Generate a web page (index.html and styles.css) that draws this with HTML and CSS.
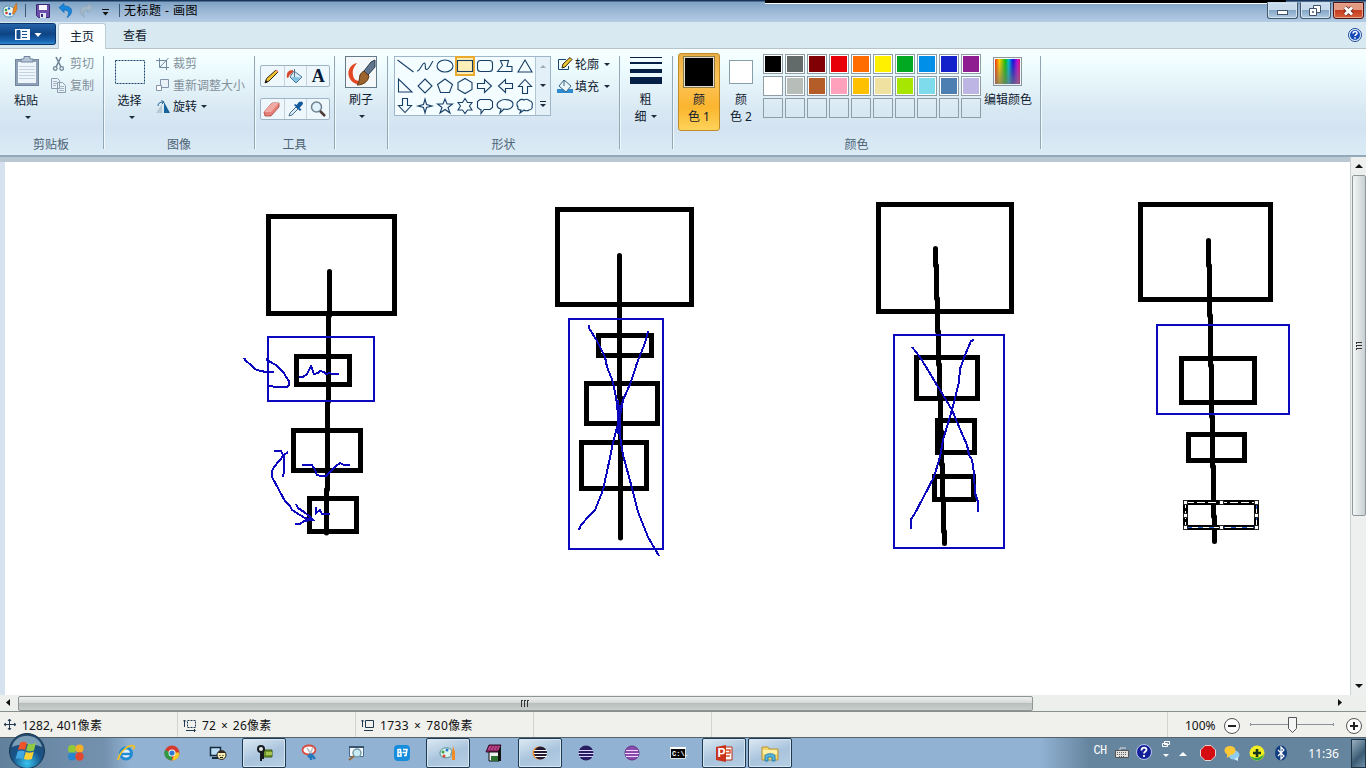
FILE: index.html
```html
<!DOCTYPE html>
<html lang="zh-CN">
<head>
<meta charset="utf-8">
<title>无标题 - 画图</title>
<link rel="stylesheet" href="styles.css">
</head>
<body>
<div class="screen">
  <header class="titlebar">
    <svg class="quick" width="124" height="22" viewBox="0 0 124 22">
      <path d="M3 11c0-5 5-6 9-4 3 2 1 3 2 5s-1 5-5 5-6-2-6-6z" fill="#e8f4f4" stroke="#4d91a6"/>
      <circle cx="6" cy="10" r="1.3" fill="#31a043"/><circle cx="9" cy="8.500" r="1.200" fill="#2a6fd0"/><circle cx="6.500" cy="13" r="1.300" fill="#d83a2a"/><circle cx="10" cy="14" r="1.300" fill="#2a6fd0"/>
      <path d="M12.500 14l1-6 3-5 .5 6-3 5z" fill="#ef8a1d" stroke="#b65a10" stroke-width=".5"/>
      <path d="M25.500 4v13M119.500 4v13" stroke="#3f5871"/>
      <path d="M36.500 4.500h13v13h-11l-2-2z" fill="#6b4faa" stroke="#3c2775"/><path d="M39 5h8v5h-8z" fill="#f6f5ff"/><path d="M40 13h6v5h-6z" fill="#dfe5f2"/><path d="M41 14h2v3h-2z" fill="#3c2775"/>
      <path d="M59 7.500l5-4v2.500c6 0 9 3 7 7.500-1 2-2 3-4 4 1-2 2-3 1.500-5-.5-2-2-2.500-4.500-2.500v2.500z" fill="#1686dc" stroke="#0a5cab" stroke-width=".6"/>
      <path d="M93 7.500l-5-4v2.500c-6 0-9 3-7 7.500 1 2 2 3 4 4-1-2-2-3-1.500-5 .5-2 2-2.500 4.500-2.500v2.500z" fill="#a3b7c8" stroke="#8da4b8" stroke-width=".6"/>
      <path d="M102 9.500h7" stroke="#111"/><path d="M102.500 12h6l-3 3.500z" fill="#111"/>
    </svg>
    <span class="title">无标题 - 画图</span>
    <span class="topline"></span>
    <div class="winbtns">
      <span class="wbtn"><svg width="28" height="16"><rect x="9.500" y="7.500" width="10" height="4" fill="#fff" stroke="#40536a"/></svg></span>
      <span class="wbtn"><svg width="28" height="16"><path d="M12.500 2.500h7v7h-7z" fill="#fff" stroke="#40536a"/><path d="M8.500 5.500h7v7h-7z" fill="#fff" stroke="#40536a"/><path d="M11.500 8.500h1v1h-1z" fill="none" stroke="#40536a"/></svg></span>
      <span class="wbtn close"><svg width="28" height="16"><path d="M11 4.500l7 7m0-7l-7 7" stroke="#5a2420" stroke-width="4.500"/><path d="M11 4.500l7 7m0-7l-7 7" stroke="#fff" stroke-width="3"/></svg></span>
    </div>
  </header>

  <nav class="tabs">
    <span class="filebtn"><svg width="28" height="13"><rect x="0" y="1" width="15" height="11" fill="#f5fbff"/><path d="M2 2.500h3v8H2zM7 3.500h5M7 6.500h5M7 9.500h5" fill="#174f8d" stroke="#174f8d" stroke-width="1"/><path d="M19.500 5h7l-3.500 4z" fill="#fff"/></svg></span>
    <span class="tab active">主页</span>
    <span class="tab">查看</span>
    <svg class="help" width="16" height="16"><circle cx="8" cy="8" r="6.500" fill="#e7f3ff" stroke="#1c4a9a"/><circle cx="8" cy="8" r="5" fill="#1549b8"/><path d="M6 6.500c0-3 4.500-2.500 4 0-.2 1-2 1.300-2 2.500" fill="none" stroke="#fff" stroke-width="1.500"/><path d="M7.200 10.200h1.600v1.500H7.200z" fill="#fff"/></svg>
  </nav>

  <section class="ribbon">
    <div class="group clip">
      <div class="body">
        <div class="big paste">
          <svg width="26" height="32"><rect x="1.500" y="3.500" width="23" height="26" fill="#8fa1b6" stroke="#72869e"/><rect x="4" y="6" width="18" height="21" fill="#eef5fb"/><path d="M5 10.500h16M5 13.500h16M5 16.500h16M5 19.500h16M5 22.500h16" stroke="#c4d3e2"/><path d="M7 6V3h3V.5h6V3h3v3z" fill="#b7c6d6" stroke="#72869e"/></svg>
          <span>粘贴</span><i class="arrow"></i>
        </div>
        <div class="rows">
          <div class="row dim"><svg width="16" height="16"><path d="M5 1l5 10M10 1L5 11" stroke="#718496" stroke-width="1.600"/><circle cx="4.300" cy="12.500" r="1.800" fill="none" stroke="#718496" stroke-width="1.300"/><circle cx="10.700" cy="12.500" r="1.800" fill="none" stroke="#718496" stroke-width="1.300"/></svg><span>剪切</span></div>
          <div class="row dim"><svg width="16" height="16"><path d="M.5 1.500h6l2 2v8h-8zM6.500 5.500h5l3 3v7h-8z" fill="#e9f2f8" stroke="#8b9eb0"/><path d="M2 4.500h4M2 6.500h4M2 8.500h3M8 9.500h5M8 11.500h5M8 13.500h5" stroke="#a5b5c4"/></svg><span>复制</span></div>
        </div>
      </div>
      <div class="caption">剪贴板</div>
    </div>

    <div class="group image">
      <div class="body">
        <div class="big select">
          <svg width="32" height="32"><rect x="1.500" y="4.500" width="29" height="23" fill="none" stroke="#16436b" stroke-dasharray="2 1"/></svg>
          <span>选择</span><i class="arrow"></i>
        </div>
        <div class="rows">
          <div class="row dim"><svg width="14" height="14"><path d="M3.500 1v9.500H13M0 3.500h10.500V13M12.500 1L4 10" fill="none" stroke="#71899c"/></svg><span>裁剪</span></div>
          <div class="row dim"><svg width="14" height="14"><path d="M4.500 1.500h8v8h-8z" fill="#e7f1f7" stroke="#8294a7"/><path d="M.5 7.500h5v5h-5z" fill="#fff" stroke="#8294a7"/></svg><span>重新调整大小</span></div>
          <div class="row"><svg width="14" height="14"><path d="M6 4v9H0z" fill="#b9c8d3"/><path d="M8 2l6 11H8z" fill="#17639c"/><path d="M2 6c0-3 2-4 5-4M5.500.5L8 2 6 4" fill="none" stroke="#1d5c91"/></svg><span>旋转</span><i class="arrow"></i></div>
        </div>
      </div>
      <div class="caption">图像</div>
    </div>

    <div class="group tools">
      <div class="body">
        <div class="toolbox">
          <span><svg width="20" height="20"><path d="M3 17l1.500-4.500L14 4l2 2-9 9z" fill="#f2c235" stroke="#2c2617"/><path d="M3 17l1-3 2 2z" fill="#111"/><path d="M13.500 4.500l2 2 1-1-2-2z" fill="#e88"/></svg></span>
          <span><svg width="20" height="20"><path d="M9 5l8 6-6 6-6-6z" fill="#d7edf8" stroke="#4d7493"/><path d="M8 11l8 .5-5 5-5-5z" fill="#7cc0e2"/><path d="M9.500 11V3" stroke="#5c7386"/><path d="M8 4C3 4 1 7 2 12c1 0 2-1 2-2l4-4z" fill="#d74a2f"/></svg></span>
          <span class="letter">A</span>
        </div>
        <div class="toolbox">
          <span><svg width="20" height="20"><path d="M2 13L10 4h7v4l-8 9H3z" fill="#e58078" stroke="#a8433e" stroke-width=".8"/><path d="M2 13L10 4h7l-8 9z" fill="#f2aaa4"/></svg></span>
          <span><svg width="20" height="20"><path d="M4 17l1-3 6-6 2 2-6 6z" fill="#d7eaf5" stroke="#4b718f"/><path d="M9 6l6 6 1.500-1.500L14.500 9 18 5c0-3-2-3-4-2l-2.500 3L10 5z" fill="#15599f"/></svg></span>
          <span><svg width="20" height="20"><circle cx="8.500" cy="8" r="5" fill="#e2f4fb" stroke="#70818f" stroke-width="1.500"/><path d="M12 12l5 5" stroke="#4e3d37" stroke-width="2.500"/></svg></span>
        </div>
      </div>
      <div class="caption">工具</div>
    </div>

    <div class="group brush">
      <div class="body">
        <div class="big">
          <svg width="32" height="32"><rect x=".5" y=".5" width="31" height="31" fill="#f5f8f8" stroke="#657b8c"/><path d="M12 7C5 8 1 16 5 23c4 6 11 7 15 1-7 2-11 1-12-5-1-5 1-8 4-12z" fill="#e34722"/><path d="M30 4v7l-7 8-4-4 7-9z" fill="#60758b" stroke="#293d50"/><path d="M19 15l5 5c-1 6-6 9-12 9 3-3 2-7 3-10 1-2 2-3 4-4z" fill="#9b652d" stroke="#5d3413"/></svg>
          <span>刷子</span><i class="arrow"></i>
        </div>
      </div>
    </div>

    <div class="group shapes">
      <div class="body">
        <div class="gallery">
          <div class="grid">
            <svg><path d="M2.500 4l16 12"/></svg>
            <svg><path d="M2 15c3 .5 5-8 7.500-8 2 1-.5 6 2 6.500 2.500 0 4-5 6.500-8.500"/></svg>
            <svg><ellipse cx="10" cy="10" rx="8" ry="6"/></svg>
            <svg class="picked"><rect x="2.500" y="4.500" width="15" height="11"/></svg>
            <svg><rect x="2.500" y="4.500" width="15" height="11" rx="3"/></svg>
            <svg><path d="M2.500 15.500l5-6-2-5h8l-1.500 6h5v5z"/></svg>
            <svg><path d="M10 4l7 12H3z"/></svg>
            <svg><path d="M3.500 3v13H17z"/></svg>
            <svg><path d="M10 3l7 7-7 7-7-7z"/></svg>
            <svg><path d="M10 3l7.500 5.500-3 8h-9l-3-8z"/></svg>
            <svg><path d="M10 2.500l7 4v7l-7 4-7-4v-7z"/></svg>
            <svg><path d="M2.500 7.500h7V3.500l7 6.500-7 6.500v-4h-7z"/></svg>
            <svg><path d="M17.500 7.500h-7V3.500l-7 6.500 7 6.500v-4h7z"/></svg>
            <svg><path d="M7.500 17.500v-7H3.500l6.500-7 6.500 7h-4v7z"/></svg>
            <svg><path d="M7.500 2.500v7H3.500l6.500 7 6.500-7h-4v-7z"/></svg>
            <svg><path d="M10 3l1.500 5.500L17 10l-5.500 1.500L10 17l-1.500-5.500L3 10l5.500-1.500z"/></svg>
            <svg><path d="M10 3l2 5h5.500L13 11.500l2 5.500-5-3.500L5 17l2-5.500L2.500 8H8z"/></svg>
            <svg><path d="M10 2.500l2.500 4H17L14.500 10l2.500 4h-4.500L10 17.500 7.500 14H3l2.500-4L3 6.500h4.500z"/></svg>
            <svg><path d="M5 3.500h10l2.500 2v6L15 13.500H9l-3 4v-4H5l-2.500-2v-6z"/></svg>
            <svg><path d="M6 13C1 12 1 7 5 5c4-3 13-1 13 3 0 5-6 6-9 5l-4 4z"/></svg>
            <svg><path d="M6 14c-2 0-4-1-3-3-2-2-1-6 1-6 1-2 4-2 5-1 3-2 5 0 6 1 2 0 3 3 2 5 1 2-1 4-3 4-1 1-4 1-5 0l-4 3z"/></svg>
          </div>
          <div class="gscroll"><i class="arrow up"></i><i class="arrow"></i><i class="arrow more"></i></div>
        </div>
        <div class="rows">
          <div class="row"><svg width="16" height="16"><path d="M9 3.500H1.500v10h10V10" fill="none" stroke="#17456f"/><path d="M5 12l1-4 7-6.500 2 2L8 11z" fill="#f0c735" stroke="#33260a"/></svg><span>轮廓</span><i class="arrow"></i></div>
          <div class="row"><svg width="16" height="16"><path d="M0 11h16v4H0z" fill="#2e8ad0"/><path d="M7 2l7 6-5 6-7-6z" fill="#eaf5fc" stroke="#376481"/><path d="M7 2v6" stroke="#376481"/></svg><span>填充</span><i class="arrow"></i></div>
        </div>
      </div>
      <div class="caption">形状</div>
    </div>

    <div class="group size">
      <div class="body">
        <div class="big"><svg width="32" height="28"><path d="M0 1h32v1H0zM0 6h32v2H0zM0 13h32v4H0zM0 21h32v7H0z" fill="#051f47"/></svg><span>粗</span><span>细<i class="arrow"></i></span></div>
      </div>
    </div>

    <div class="group colors">
      <div class="body">
        <div class="colorbtn on"><b class="sw black"></b><span>颜</span><span>色 1</span></div>
        <div class="colorbtn"><b class="sw white"></b><span>颜</span><span>色 2</span></div>
        <div class="palette">
          <i class="c-black"></i><i class="c-gray"></i><i class="c-maroon"></i><i class="c-red"></i><i class="c-orange"></i><i class="c-yellow"></i><i class="c-green"></i><i class="c-azure"></i><i class="c-blue"></i><i class="c-purple"></i>
          <i class="c-white"></i><i class="c-silver"></i><i class="c-brown"></i><i class="c-pink"></i><i class="c-gold"></i><i class="c-cream"></i><i class="c-lime"></i><i class="c-sky"></i><i class="c-steel"></i><i class="c-lilac"></i>
          <i></i><i></i><i></i><i></i><i></i><i></i><i></i><i></i><i></i><i></i>
        </div>
        <div class="big edit"><b class="rainbow"></b><span>编辑颜色</span></div>
      </div>
      <div class="caption">颜色</div>
    </div>
  </section>

  <main class="workspace">
    <div class="view">
      <svg class="drawing" width="1345" height="533" viewBox="5 162 1345 533">
        <g class="thick">
          <path d="M268.500 216.500h126v97h-126zM296.500 356.500h53v28h-53zM293.500 430.500h67v40h-67zM309.500 498.500h47v33h-47z"/>
          <path class="round" d="M329.500 271.500v44l-1 0v86l-1 0v88l-1 0v43.500"/>
          <path d="M557.500 209.500h134v95h-134zM598.500 335.500h53v20h-53zM586.500 383.500h71v40h-71zM581.500 442.500h65v46h-65z"/>
          <path class="round" d="M619.500 255.500v142l1 0v140.500"/>
          <path d="M878.500 204.500h133v107h-133zM916.500 357.500h61v41h-61zM937.500 420.500h37v32h-37zM934.500 476.500h39v23h-39z"/>
          <path class="round" d="M935.500 248.500v17l1 0v33l1 0v33l1 0v33l1 0v34l1 0v33l1 0v33l1 0v34l1 0v33l1 0v12"/>
          <path d="M1140.500 204.500h130v95h-130zM1181.500 358.500h73v44h-73zM1188.500 434.500h56v26h-56zM1185.500 502.500h71v25h-71z"/>
          <path class="round" d="M1208.500 240.500v25l1 0v50l1 0v50l1 0v51l1 0v50l1 0v50l1 0v25"/>
        </g>
        <g class="thin">
          <path d="M268 337h106v64H268zM569 319h94v230h-94zM894 335h110v213H894zM1157 325h132v89h-132z"/>
          <path d="M244 358l2 3 5 4 4 4 5 2 7 1 7 0M266 359l6 4 4 2 8 8 2 4 3 4v4l-2 2h-8l-12-1M299 377h4l4-3 2-4 2-4 3 8 4-1 2-2 4 1 2 2 4-1 2 1 7 0"/>
          <path d="M274 451h7l3 6v14l-1 6M288 452l-4 3-5 6-5 6-2 4v6l7 13 6 11 5 5 2 4 8 5 8 5M296 504l2 4 6 4 5 4 4 4-9 1-4 3-5 0M302 465h10l3 5 2 5 4 1h5l4-4 6-6 4-3 4 2 6 0M316 507v6l4-3 2 4h8M305 518l8 2"/>
          <path d="M589 325v3L597 341 605 357 607 367 613 382 617 403 619 430 623 455 632 488 638 512 648 537 659 556M648 331L645 343 637 363 631 382 623 400 619 420 613 443 608 467 603 490 595 510 589 516 581 525 579 530"/>
          <path d="M912 347L920 357 940 390 952 410 960 429 967 445 969 455 972 460 974 473 975 493 978 502V512M974 340L971 341 965 355 960 369 959 382 952 410 943 440 940 457 934 477 923 498 914 515 911 519V529"/>
          <path d="M618 400v34M620 405v30"/>
        </g>
        <g class="selection">
          <rect x="1185.500" y="502.500" width="71" height="25" stroke="#fff" stroke-dasharray="8 3"/>
          <path d="M1187 527.500h68M1256.500 504v22" stroke="#2560cf" stroke-dasharray="5 6"/>
          <path d="M1183.500 500.500h4v4h-4zM1219.500 500.500h4v4h-4zM1254.500 500.500h4v4h-4zM1183.500 513.500h4v4h-4zM1254.500 513.500h4v4h-4zM1183.500 525.500h4v4h-4zM1219.500 525.500h4v4h-4zM1254.500 525.500h4v4h-4z" fill="#fff" stroke="#222"/>
        </g>
      </svg>
    </div>
    <div class="vscroll"><i class="arrow up"></i><span class="thumb"><svg width="8" height="10"><path d="M1 1.500h6M1 4.500h6M1 7.500h6M1.500 1v2M1.500 4v2M1.500 7v2" stroke="#333"/></svg></span><i class="arrow"></i></div>
  </main>
  <div class="hscroll"><svg width="18" height="16"><path d="M10 4v7L6 7.500z" fill="#111"/></svg><span class="thumb"><svg width="12" height="8"><path d="M1.500 0v7M4.500 0v7M7.500 0v7M1 .5h2M4 .5h2M7 .5h2" stroke="#333"/></svg></span><svg class="hend" width="18" height="16"><path d="M7 4v7l4-3.500z" fill="#111"/></svg></div>

  <footer class="status">
    <div class="cell pos"><svg width="14" height="14"><path d="M0 6.500h12M5.500 1v11M4 3l1.500-2L7 3M4 10l1.500 2L7 10M2 5L0 6.500 2 8M10 5l2 1.500L10 8" fill="none" stroke="#20394e"/></svg><span>1282, 401像素</span></div>
    <div class="cell sel"><svg width="15" height="14"><path d="M1.500 2v7M0 3.500L1.500 2 3 3.500M3 12.500h9M11 11l1.500 1.500L11 14" fill="none" stroke="#20394e"/><rect x="4.500" y="2.500" width="8" height="7" fill="none" stroke="#20394e" stroke-dasharray="2 1"/></svg><span>72 × 26像素</span></div>
    <div class="cell dim2"><svg width="15" height="14"><path d="M1.500 2v7M0 3.500L1.500 2 3 3.500M3 12.500h9M4.500 2.500h8v7h-8z" fill="none" stroke="#20394e"/></svg><span>1733 × 780像素</span></div>
    <div class="cell blank"></div>
    <div class="cell rest"></div>
    <div class="zoombar"><span>100%</span>
      <svg width="142" height="24"><g fill="#fcfdfc" stroke="#555"><circle cx="9" cy="12" r="7.500"/><circle cx="131" cy="12" r="7.500"/></g><path d="M5 12h8M127 12h8M131 8v8" stroke="#222" stroke-width="2"/><path d="M27.500 9v3M27 10.500h83M110.500 9v3" stroke="#8b9399"/><path d="M65.500 3.500h8v11l-4 4-4-4z" fill="#f4f5f5" stroke="#555"/></svg></div>
  </footer>

  <footer class="taskbar">
    <svg class="orb" width="38" height="38" viewBox="0 0 38 38"><defs><radialGradient id="orbfill" cx=".5" cy=".85" r=".85"><stop offset="0" stop-color="#37c4ee"/><stop offset=".5" stop-color="#185389"/><stop offset="1" stop-color="#274a69"/></radialGradient></defs><circle cx="19" cy="19" r="17.500" fill="url(#orbfill)" stroke="#16344f"/><path d="M4 15C7 0 31 0 34 15c-9-4-21-4-30 0z" fill="#aac8d9" opacity=".65"/><path d="M12 11c3-2 5-1 7 0l-2 7c-2-1-5-1-7 0z" fill="#f0542b"/><path d="M20 11.500c3 1 5 1 8-1l-2 8c-3 1-5 1-8 0z" fill="#90ca43"/><path d="M9.500 19.500c3-1.500 5-1 7.300 0l-2 7.500c-2-1-5-1-7 0z" fill="#41a7e4"/><path d="M17.800 20c3 1 5 1 8-.5l-2 7.500c-3 1-5 1-8 0z" fill="#fed035"/></svg>
    <div class="apps">
      <span class="app first"><svg><circle cx="6" cy="6" r="4" fill="#91c936"/><circle cx="13.500" cy="5.500" r="4" fill="#f5ae28"/><circle cx="6" cy="13.500" r="4" fill="#2886cf"/><circle cx="13.500" cy="13.500" r="4.200" fill="#e2482f"/></svg></span>
      <span class="app"><svg><circle cx="10" cy="10.500" r="5.500" fill="#dff2ff" stroke="#228bd1" stroke-width="3"/><path d="M5 11h11" stroke="#228bd1" stroke-width="2.500"/><path d="M2 17C4 8 13 1 18 3c1 1 0 2-1 3" fill="none" stroke="#f0c128" stroke-width="1.800"/></svg></span>
      <span class="app"><svg><circle cx="10" cy="10" r="7.500" fill="#d63a2b"/><path d="M10 10l-7-3c-2 5 1 10 7 10.500z" fill="#2e9a45"/><path d="M10 17.500l3-8h4c1 4-2 8-7 8z" fill="#f6c928"/><circle cx="10" cy="10" r="3.500" fill="#fff"/><circle cx="10" cy="10" r="2.600" fill="#2e77cf"/></svg></span>
      <span class="app"><svg><rect x="2.500" y="4.500" width="10" height="8" fill="#b9dcf4" stroke="#172b3d" stroke-width="1.500"/><path d="M4 15h7" stroke="#172b3d" stroke-width="2"/><circle cx="13.500" cy="12" r="4.500" fill="#f9edb0" stroke="#1b1e21"/><path d="M10 10l1-2h5l2 2z" fill="#35261d"/><path d="M12 12v1m3-1v1m-3 1.500h3" stroke="#111"/></svg></span>
      <span class="app open"><svg><path d="M8 7h10v7H9z" fill="#6e942e" stroke="#415a15"/><path d="M12 9h6v3h-6z" fill="#a7c64f"/><circle cx="7" cy="6" r="3" fill="#e3e9e9" stroke="#171b1d" stroke-width="2"/><path d="M7 9v9M9 8v8" stroke="#171b1d" stroke-width="2"/></svg></span>
      <span class="app"><svg><ellipse cx="9" cy="7" rx="6.500" ry="4.500" fill="#fff" stroke="#d84a3e" stroke-width="1.800"/><path d="M7 5l6 9M13 4l-4 10" stroke="#b9bcc2" stroke-width="1.500"/><path d="M8 14l3-3M11 11l4 5M11 12v5" stroke="#2377bb" stroke-width="2.500"/></svg></span>
      <span class="app"><svg><path d="M3.500 3.500h14v10h-14z" fill="#f8fbff" stroke="#456c8e"/><path d="M3 3h15v2H3z" fill="#37566d"/><circle cx="11" cy="10" r="4" fill="#c8ebf5" stroke="#789caa" stroke-width="1.500"/><path d="M8 13l-5 4" stroke="#9b6b3b" stroke-width="2"/></svg></span>
      <span class="app"><svg><rect x="2" y="2" width="16" height="16" rx="4" fill="#168cdc"/><path d="M6 6v8M6 6.500h2.500v3H6h3v3.500H6M11 6.500h4l-1 6h-2M10.500 9.500h4" fill="none" stroke="#fff" stroke-width="1.500"/></svg></span>
      <span class="app open"><svg><path d="M2 10c0-6 10-7 12-2 0 2-2 2-1 4 1 3-11 5-11-2z" fill="#dcf4ed" stroke="#528d8d"/><circle cx="5" cy="9" r="1.500" fill="#35a24b"/><circle cx="9" cy="7" r="1.500" fill="#2a75cf"/><circle cx="6" cy="13" r="1.500" fill="#e14634"/><path d="M14 17V9l1-6 2 6v8z" fill="#f28b24"/></svg></span>
      <span class="app"><svg><path d="M5 2h12l-3 7H2z" fill="#8f2261" stroke="#35102b"/><path d="M5 9h10v9H5z" fill="#eee" stroke="#111"/><path d="M14 9l3-7v16h-3z" fill="#111"/><path d="M7 13h7v5H7z" fill="#2d7131"/><path d="M5 4h11M4 6h11" stroke="#da65a7" stroke-dasharray="2 1"/></svg></span>
      <span class="app open"><svg><circle cx="9" cy="10" r="6.500" fill="#f28a26"/><circle cx="10.500" cy="10" r="6.500" fill="#241a31"/><path d="M4 7.500h13M4 10.500h13M5 13.500h12" stroke="#fff" stroke-width="1.200"/></svg></span>
      <span class="app"><svg><circle cx="10" cy="10" r="7.500" fill="#281d60"/><path d="M3 7.500h14M2 10.500h16M3 13.500h14" stroke="#d9d5ff"/></svg></span>
      <span class="app"><svg><circle cx="10" cy="10" r="7" fill="#8a4cab" stroke="#653184"/><path d="M4 7.500h12M3 10.500h14M4 13.500h12" stroke="#f3d9ff"/></svg></span>
      <span class="app"><svg><path d="M2.500 4.500h15v11h-15z" fill="#050505" stroke="#d9e0e4"/><path d="M2 4h16v2H2z" fill="#fff"/><text x="4" y="13" class="cmd">C:\.</text></svg></span>
      <span class="app open"><svg><path d="M10 4h8v13h-8z" fill="#fff" stroke="#b52b18"/><path d="M12 7h4v3h-4M12 13h4" fill="none" stroke="#d65432" stroke-width="1.500"/><path d="M2 4l10-2v17L2 17z" fill="#c9331c"/><text x="3.500" y="14" class="ppt">P</text></svg></span>
      <span class="app open"><svg><path d="M2 4h6l1 2h9v11H2z" fill="#f3d66c" stroke="#b89437"/><path d="M3 7h14v4H3z" fill="#fff0a6"/><path d="M5 18v-5c0-3 10-3 10 0v5h-3v-4H8v4z" fill="#56b6dd" stroke="#2880aa"/></svg></span>
    </div>
    <div class="tray">
      <span class="lang">CH</span>
      <svg width="14" height="12"><path d="M.5 3.500h13v7H.5z" fill="#e3e3df" stroke="#555"/><path d="M2 5.500h10M2 7.500h10M4 9.500h6" stroke="#666" stroke-dasharray="1 1"/><path d="M5 3V1h6" fill="none" stroke="#ddd"/></svg>
      <svg class="thelp" width="16" height="16"><circle cx="8" cy="8" r="7.500" fill="#121f96" stroke="#bac8ef"/><path d="M5.500 6.500c0-4 5.500-3.500 5-.5-.2 1.500-2.500 1.500-2.500 3.500M8 11v2" fill="none" stroke="#fff" stroke-width="1.800"/></svg>
      <svg class="mini" width="10" height="20"><path d="M3.500 1.500h5v3h-5zM1.500 3.500h5v3h-5z" fill="#68869f" stroke="#fff"/><path d="M2 14h6l-3 3z" fill="#fff"/></svg>
      <svg class="upt" width="10" height="8"><path d="M1 6h8L5 2z" fill="#fff"/></svg>
      <svg class="stop" width="16" height="16"><path d="M5 .5h6L15.500 5v6L11 15.500H5L.5 11V5z" fill="#d50d13" stroke="#e4d4d4"/></svg>
      <svg class="chat" width="16" height="16"><ellipse cx="10" cy="10" rx="5.500" ry="4.500" fill="#8fcdf0"/><path d="M10 14l4 2v-4z" fill="#d8eef8"/><ellipse cx="6" cy="5.500" rx="5.500" ry="4.500" fill="#fdc736"/><path d="M3 9v4l4-3z" fill="#fdc736"/></svg>
      <svg class="safe" width="16" height="16"><circle cx="8" cy="8" r="7.500" fill="#f3ee22"/><path d="M1 11c4 6 12 6 14-2-3 4-9 5-14 2z" fill="#33a63c"/><path d="M8 4v8M4 8h8" stroke="#17371c" stroke-width="2.600"/></svg>
      <svg class="bt" width="14" height="16"><ellipse cx="7" cy="8" rx="6" ry="7.500" fill="#123d81"/><path d="M4 5l6 6-3 3V2l3 3-6 6" fill="none" stroke="#fff" stroke-width="1.200"/></svg>
      <span class="clock">11:36</span><span class="peek"></span>
    </div>
  </footer>
</div>
</body>
</html>
```
FILE: styles.css
```css
* { box-sizing: border-box; }
body { margin: 0; font: 12px/16px "Noto Sans", "Noto Sans CJK SC", sans-serif; color: #10202e; }
svg { display: block; flex: none; }
.screen { width: 1366px; height: 768px; display: flex; flex-direction: column; overflow: hidden; background: #fff; }
.titlebar { height: 22px; flex: none; display: flex; background: linear-gradient(#18355b 0 1px, #7fa3c4 2px, #9db9d6 12px, #b4cce4); position: relative; }
.title { line-height: 22px; color: #000; letter-spacing: .5px; }
.topline { position: absolute; left: 765px; top: 0; width: 521px; height: 4px; background: #000; border-bottom: 1px solid #fff; }
.winbtns { margin: 2px 2px 0 auto; display: flex; gap: 2px; z-index: 1; }
.wbtn { width: 31px; height: 17px; border: 1px solid #43586f; border-top-color: #c5d9eb; border-radius: 0 0 3px 3px; background: linear-gradient(#c6daeb 45%, #85a7c7 50%, #b2cbe2); box-shadow: inset 0 0 0 1px #d3e3f0; }
.close { border-color: #4b1514; background: linear-gradient(#e39a82 45%, #c53d20 50%, #d8613d); box-shadow: inset 0 0 0 1px #e9a58f; }
.tabs { height: 27px; flex: none; display: flex; background: #d9e9f2; border-bottom: 1px solid #b6c3ca; }
.filebtn { width: 56px; height: 22px; margin: 1px 2px 0 0; padding: 4px 0 0 15px; background: linear-gradient(#2464a8, #0d4384 50%, #1866b2 85%, #3789ce); border: 1px solid #0b366b; border-left: 0; border-radius: 0 3px 3px 0; }
.tab { width: 48px; height: 26px; margin-top: 1px; line-height: 26px; text-align: center; border-radius: 3px 3px 0 0; }
.tab + .tab { margin-left: 5px; }
.tab.active { background: #fafefe; border: 1px solid #b9cbd6; border-bottom: 0; line-height: 25px; }
.help { margin: 5px 3px 0 auto; }
.ribbon { height: 108px; flex: none; display: flex; background: linear-gradient(#f8ffff, #effdff 15px, #d9e9f3 60px, #d3e3f1 80px, #dbebf5 104px); border-bottom: 2px solid #94a9b8; padding-top: 3px; }
.group { height: 101px; padding-top: 4px; display: flex; flex-direction: column; position: relative; }
.group::after { content: ""; width: 2px; height: 93px; position: absolute; right: 0; top: 4px; background: linear-gradient(90deg, #92a8b7 50%, #f1f9fd 50%); }
.body { display: flex; height: 79px; }
.caption { text-align: center; color: #4c6375; height: 16px; line-height: 16px; padding-right: 3px; margin-top: 2px; }
.clip { width: 105px; }
.image { width: 151px; }
.tools { width: 80px; }
.brush { width: 53px; }
.shapes { width: 232px; }
.size { width: 53px; }
.colors { width: 368px; }
.arrow { display: inline-block; width: 0; height: 0; border: 3px solid transparent; border-top-color: #1a2c3d; border-bottom: 0; }
.arrow.up { border-top: 0; border-bottom: 3px solid #1a2c3d; }
.big { display: flex; flex-direction: column; align-items: center; white-space: nowrap; }
.big > span { line-height: 17px; }
.big > .arrow { margin-top: 7px; }
.paste { width: 53px; }
.paste > span, .select > span { margin-top: 4px; margin-right: 1px; }
.paste > .arrow, .select > .arrow { margin-left: 3px; }
.select { width: 50px; }
.rows { display: flex; flex-direction: column; margin-top: -3px; }
.row { display: flex; align-items: center; height: 21.500px; white-space: nowrap; }
.row span { padding-top: 1px; }
.row .arrow { margin-left: 4px; }
.dim { color: #83909a; }
.clip .row { gap: 3px; margin-left: -2px; }
.image .rows { margin-left: 1px; }
.image .row { gap: 3px; }
.image .row .arrow { margin-left: 1px; }
.tools .body { flex-direction: column; gap: 11px; padding: 9px 0 0 4px; }
.toolbox { width: 70px; height: 22px; display: grid; grid-template-columns: repeat(3, 1fr); border: 1px solid #9fb5c7; border-radius: 2px; background: #eef8fc; }
.toolbox span { border-left: 1px solid #c4d4df; display: grid; place-items: center; }
.toolbox span:first-child { border: 0; }
.letter { font: bold 18px/20px "Liberation Serif", serif; color: #051b36; }
.brush .big { width: 50px; }
.brush .big span { margin-top: 3px; }
.brush .big .arrow { margin-left: 2px; }
.shapes .body { padding-left: 5px; }
.gallery { width: 157px; height: 60px; border: 1px solid #9eb6c8; background: #f3fcff; display: flex; }
.grid { display: grid; grid-template-columns: repeat(7, 20px); grid-auto-rows: 20px; margin-top: -1px; height: 60px; }
.grid svg { width: 20px; height: 20px; fill: none; stroke: #173f66; stroke-width: 1.100; }
.grid .picked { background: #fff0b8; box-shadow: inset 0 0 0 2px #e9a92c; }
.gscroll { flex: 1; border-left: 1px solid #b3c6d4; background: #e4f0f7; display: flex; flex-direction: column; align-items: center; justify-content: space-around; }
.gscroll .up { border-bottom-color: #9cacb9; }
.more { position: relative; }
.more::before { content: ""; position: absolute; left: -3px; top: -6px; width: 6px; height: 1px; background: #1a2c3d; }
.shapes .rows { margin: -3px 0 0 6px; }
.shapes .row { gap: 2px; height: 22px; }
.shapes .row .arrow { margin-left: 3px; }
.size .big { width: 49px; }
.size .big span:nth-child(2) { margin-top: 7px; }
.size .arrow { margin: 0 0 3px 4px; }
.size svg { margin-right: -1px; }
.colors .body { padding-left: 4px; }
.colorbtn { width: 42px; height: 78px; margin-top: -3px; display: flex; flex-direction: column; align-items: center; line-height: 17px; padding-top: 2px; border: 1px solid transparent; border-radius: 3px; }
.colorbtn.on { background: linear-gradient(#e9ae45, #fdc459 35%, #fbb52e 70%, #fed35a); border-color: #bf8a27; }
.sw { border: 1px solid #879fa9; }
.sw.black { width: 32px; height: 32px; background: #000; outline: 1px solid #8f7940; outline-offset: -1px; border: 2px solid #dddfd4; margin-bottom: 3px; }
.sw.white { width: 24px; height: 24px; background: #fff; margin: 4px 0 7px; }
.palette { display: grid; grid-template-columns: repeat(10, 20px); grid-auto-rows: 20px; gap: 2px; margin: -2px 0 0 1px; }
.palette i { border: 1px solid #8e9da6; background-clip: content-box; padding: 1px; box-shadow: inset 0 0 0 1px #fff; }
.palette i:nth-child(n+21) { box-shadow: none; }
.c-black { background: #000; }
.c-gray { background: #626b69; }
.c-maroon { background: #800004; }
.c-red { background: #e70008; }
.c-orange { background: #ff6d00; }
.c-yellow { background: #fff000; }
.c-green { background: #00a921; }
.c-azure { background: #008fe8; }
.c-blue { background: #1221c9; }
.c-purple { background: #8d1d91; }
.c-white { background: #fff; }
.c-silver { background: #b7bdb9; }
.c-brown { background: #b45d28; }
.c-pink { background: #ffa0bd; }
.c-gold { background: #ffc000; }
.c-cream { background: #efe1a0; }
.c-lime { background: #a7e600; }
.c-sky { background: #7edbeb; }
.c-steel { background: #4d7fb3; }
.c-lilac { background: #bdb5e3; }
.edit { margin-left: 2px; width: 50px; }
.rainbow { width: 29px; height: 29px; margin: 1px 1px 5px 0; border: 1px solid #8b959b; padding: 1px; background-clip: content-box; background-image: linear-gradient(transparent 10%, #777b), linear-gradient(90deg, #e11, #fc0 20%, #1b1 42%, #0bc 54%, #11d 70%, #c1c 88%, #d12); }
.workspace { height: 538px; flex: none; display: flex; background: #dce7f1; }
.view { flex: 1; border-top: 5px solid #b9c8d3; padding-left: 5px; background: #d6e2ef; }
.drawing { background: #fff; }
.drawing path, .drawing rect { shape-rendering: crispEdges; }
.thick { fill: none; stroke: #000; stroke-width: 5; }
.drawing .round { stroke-linecap: round; stroke-linejoin: round; shape-rendering: auto; }
.thin { fill: none; stroke: #0c08bd; stroke-width: 2; }
.selection { fill: none; }
.vscroll { width: 16px; background: #edf0ef; display: flex; flex-direction: column; align-items: center; padding: 7px 0; gap: 7px; border-left: 1px solid #ccd3d6; }
.vscroll .thumb { width: 14px; height: 341px; background: linear-gradient(90deg, #f4f6f6, #c9cfd1); border: 1px solid #8e9799; border-radius: 2px; display: grid; place-items: center; }
.vscroll .arrow:last-child { margin-top: auto; }
.vscroll .arrow { border-width: 4px; border-top-color: #111; border-bottom-width: 0; }
.vscroll .arrow.up { border-top-width: 0; border-bottom: 4px solid #111; }
.hscroll { height: 17px; flex: none; background: #ecefec; display: flex; border-bottom: 1px solid #88908f; }
.hscroll .thumb { width: 1015px; height: 15px; margin-top: 1px; background: linear-gradient(#eef0ef, #d4d9d7 45%, #b8bfbc 50%, #c8cecb); border: 1px solid #8d9694; border-radius: 2px; display: grid; place-items: center; }
.hend { margin: 0 17px 0 auto; }
.status { height: 26px; flex: none; background: #f0f0ed; display: flex; color: #111; border-bottom: 1px solid #57636b; }
.cell { width: 178px; height: 25px; padding-left: 5px; border-right: 1px solid #d1d3d1; display: flex; align-items: center; gap: 4px; white-space: nowrap; }
.cell span, .zoombar span { padding-top: 2px; }
.pos { padding-left: 4px; letter-spacing: .15px; }
.sel { letter-spacing: .2px; word-spacing: 1.500px; }
.dim2 { letter-spacing: .4px; word-spacing: 1.500px; }
.rest { width: 456px; }
.zoombar { display: flex; align-items: center; gap: 7px; padding-left: 17px; }
.zoombar svg { margin-top: 2px; }
.taskbar { height: 30px; flex: none; display: flex; position: relative; background: linear-gradient(90deg, #60809b 0, #6f8daa 70px, #7390ad 104px, #91b2d3 130px 1040px, #65849e 1090px 1366px); }
.orb { position: absolute; left: 8px; top: -6px; }
.apps { display: flex; gap: 2px; margin-left: 54px; flex: none; }
.app { width: 44px; height: 30px; display: grid; place-items: center; flex: none; }
.app.first { width: 46px; }
.app svg { width: 20px; height: 20px; }
.app.open { background: linear-gradient(160deg, #dce9f3, #a8c3dc 55%, #b6cfe4); border: 1px solid #1d3a51; border-radius: 2px; box-shadow: inset 0 0 0 1px #d6e5f1; }
.app.first { padding-right: 2px; margin-right: 2px; }
.cmd { font: bold 7px "Liberation Mono", monospace; fill: #fff; }
.ppt { font: bold 12px "Liberation Sans", sans-serif; fill: #fff; }
.tray { display: flex; align-items: center; margin-left: auto; color: #fff; height: 30px; }
.lang { font: 12px "Liberation Mono", monospace; letter-spacing: -.8px; margin: -4px 9px 0 0; }
.thelp { margin: -3px 2px 0 7px; }
.mini { margin: -6px 6px 0 7px; }
.upt { margin: 2px 12px 0 1px; }
.stop { margin-right: 8px; }
.chat { margin-right: 9px; }
.safe { margin-right: 9px; }
.bt { margin-right: 20px; }
.clock { margin-right: 12px; padding-top: 2px; }
.peek { width: 15px; height: 29px; border: 1px solid #1e3547; background: linear-gradient(135deg, #9ab0c0, #3b5c74 60%, #6f8fa6); }
```
